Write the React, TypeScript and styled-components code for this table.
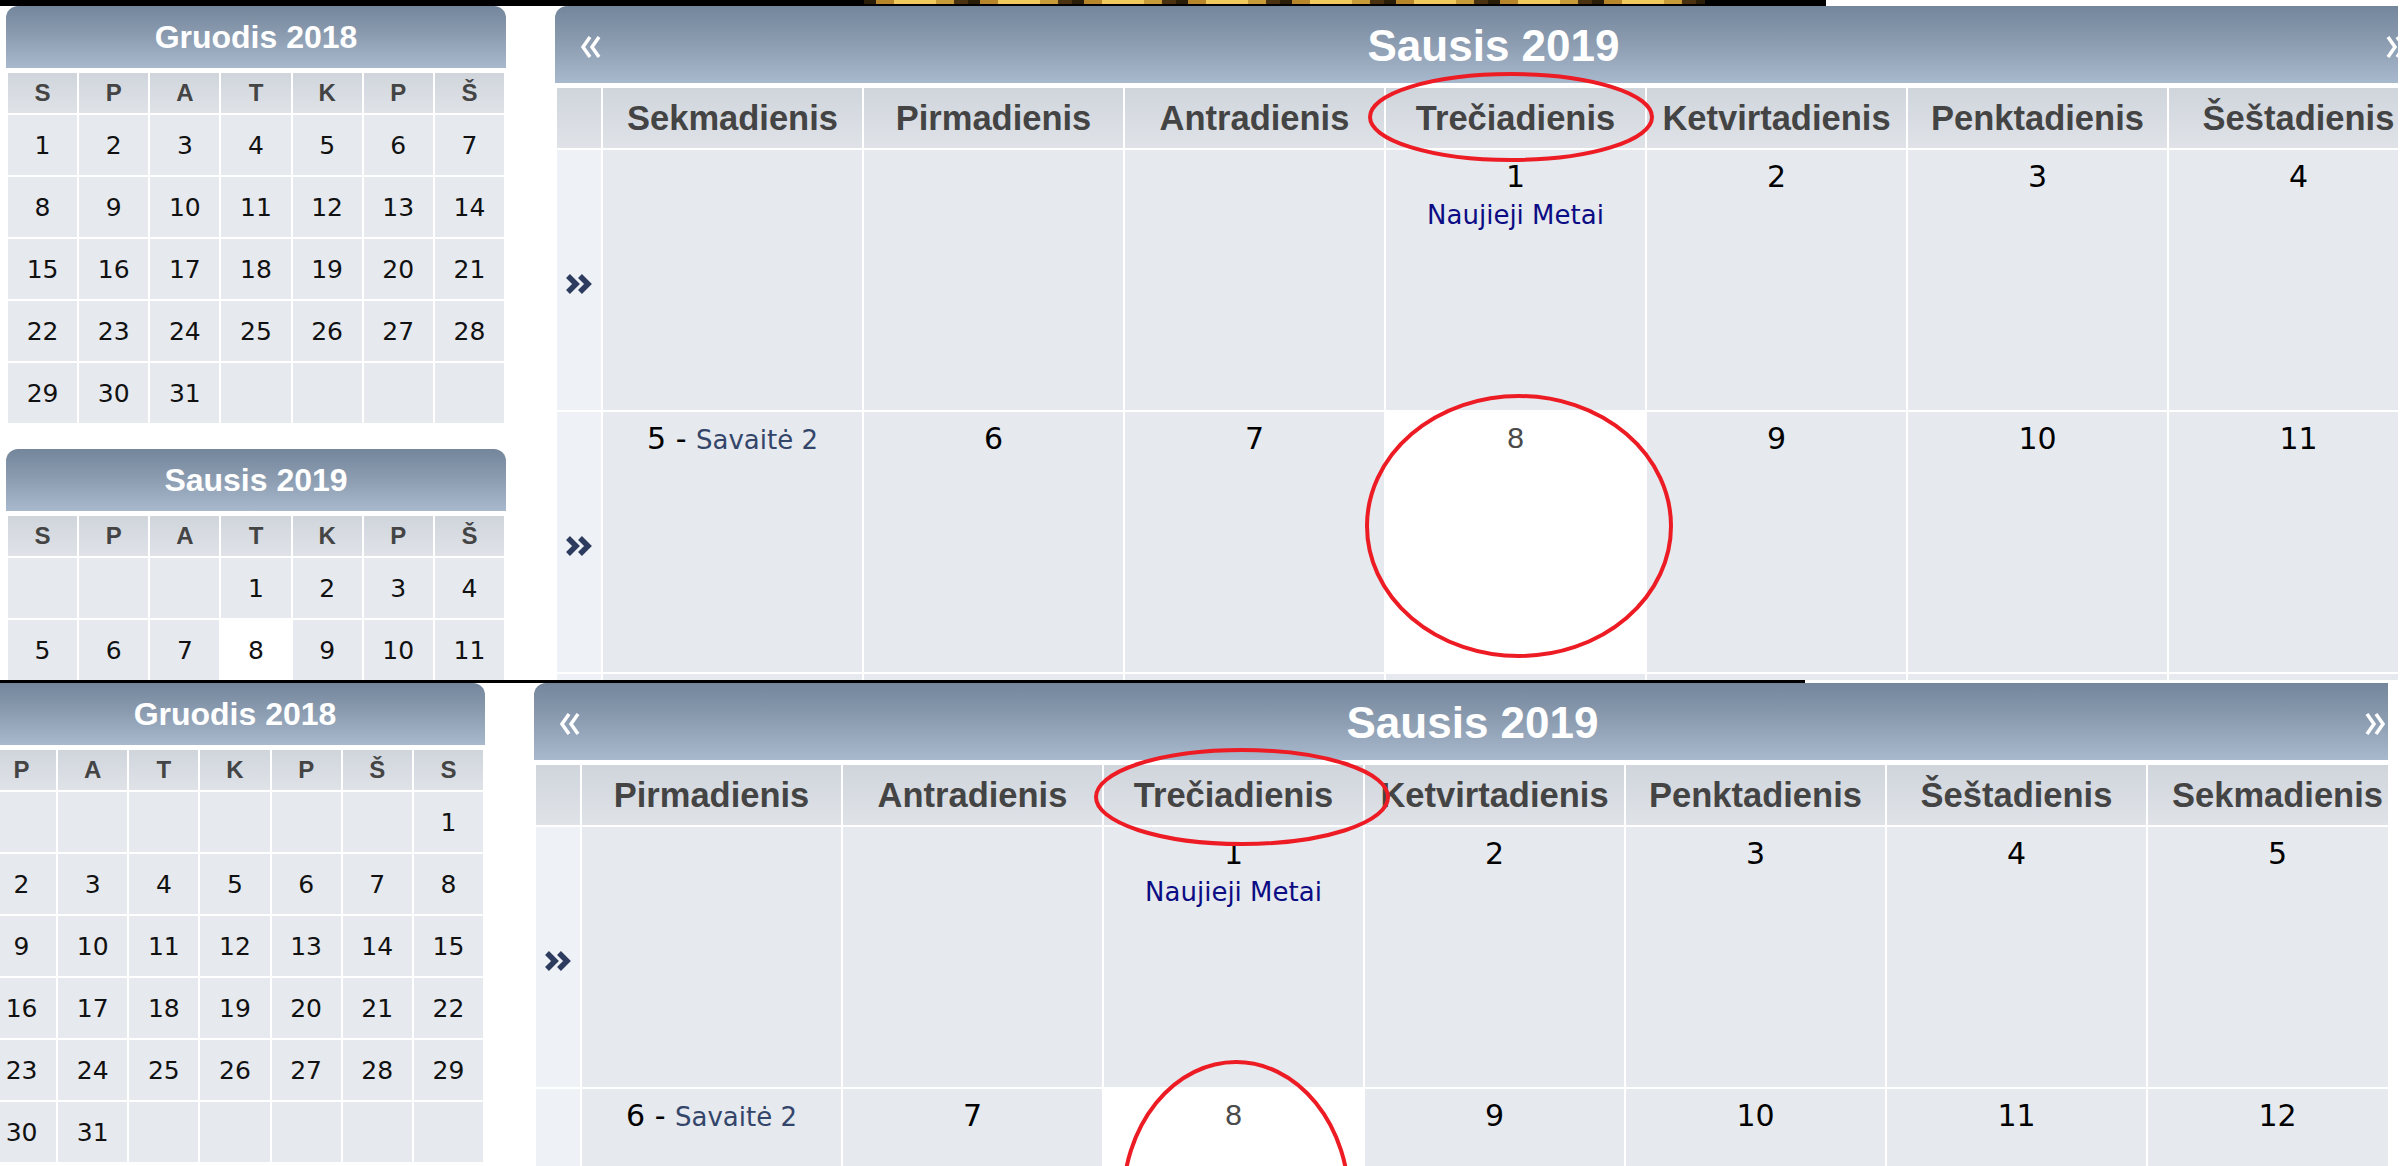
import React from 'react';
import styled, { createGlobalStyle } from 'styled-components';

const HEAD_FONT = '"Liberation Sans", Arial, sans-serif';
const BODY_FONT = '"DejaVu Sans", Verdana, sans-serif';

const GlobalStyle = createGlobalStyle`
  html, body {
    margin: 0;
    padding: 0;
    background: #fff;
  }
  body {
    font-family: ${BODY_FONT};
  }
`;

const Page = styled.div`
  position: relative;
  width: 2402px;
  height: 1166px;
  overflow: hidden;
  background: #fff;
`;

const Shot = styled.div<{ $w: number; $h: number }>`
  width: ${p => p.$w}px;
  height: ${p => p.$h}px;
  overflow: hidden;
  background: #fff;
`;

const Banner = styled.div`
  width: 1826px;
  height: 6px;
  background: #000;
  padding-left: 864px;
  box-sizing: border-box;
`;

const BannerImage = styled.div`
  width: 841px;
  height: 4px;
  background: repeating-linear-gradient(
    90deg,
    #2a1d08 0 12px,
    #b8862a 12px 30px,
    #f1c85c 30px 72px,
    #c99a38 72px 90px,
    #4a3210 90px 104px
  );
`;

const Divider = styled.div`
  width: 1805px;
  height: 3px;
  background: #000;
`;

const Layout = styled.div<{ $dx: number }>`
  display: flex;
  align-items: flex-start;
  gap: 49px;
  padding-left: 6px;
  margin-left: ${p => p.$dx}px;
`;

const Sidebar = styled.div`
  flex: 0 0 500px;
  display: flex;
  flex-direction: column;
  gap: 24px;
`;

const gradientHead = `linear-gradient(180deg, #74869b 0%, #8a9bb0 45%, #a8b9ce 100%)`;

const MiniHeader = styled.div`
  height: 62px;
  margin-bottom: 3px;
  border-radius: 12px 12px 0 0;
  background: ${gradientHead};
  color: #fff;
  font: bold 32px ${HEAD_FONT};
  display: flex;
  align-items: center;
  justify-content: center;
`;

const MiniGrid = styled.div`
  display: grid;
  grid-template-columns: repeat(7, 1fr);
  grid-template-rows: 40px;
  grid-auto-rows: 60px;
  gap: 2px;
  padding: 2px;
`;

const MiniHead = styled.div`
  background: linear-gradient(180deg, #d0d5dc, #dfe3e8);
  color: #444;
  font: bold 24px ${HEAD_FONT};
  display: flex;
  align-items: center;
  justify-content: center;
`;

const MiniDay = styled.div<{ $today?: boolean }>`
  background: ${p => (p.$today ? '#fff' : '#e6e9ee')};
  color: #111;
  font: 25px ${BODY_FONT};
  display: flex;
  align-items: center;
  justify-content: center;
`;

const Main = styled.div`
  flex: 0 0 1875px;
`;

const MainHeader = styled.div`
  height: 77px;
  margin-bottom: 3px;
  border-radius: 12px 12px 0 0;
  background: ${gradientHead};
  display: grid;
  grid-template-columns: auto 1fr auto;
  align-items: center;
  padding: 0 23px 0 25px;
`;

const MonthTitle = styled.div`
  color: #fff;
  font: bold 44px ${HEAD_FONT};
  text-align: center;
  padding-top: 2px;
`;

const NavIcon = styled.svg`
  display: block;
  margin-top: 5px;
`;

const MainGrid = styled.div`
  display: grid;
  grid-template-columns: 44px repeat(7, 259px);
  grid-template-rows: 60px;
  grid-auto-rows: 260px;
  gap: 2px;
  padding: 2px;
`;

const DayName = styled.div`
  background: linear-gradient(180deg, #d0d5dc, #dfe3e8);
  color: #444;
  font: bold 34.5px ${HEAD_FONT};
  display: flex;
  align-items: center;
  justify-content: center;
  white-space: nowrap;
`;

const WeekMarker = styled.div`
  background: #eef1f5;
  display: flex;
  align-items: center;
  justify-content: center;
  padding-top: 8px;
  box-sizing: border-box;
`;

const DayCell = styled.div<{ $today?: boolean }>`
  background: ${p => (p.$today ? '#fff' : '#e6e9ee')};
  text-align: center;
  padding-top: 9px;
  box-sizing: border-box;
  white-space: nowrap;
`;

const DayNumber = styled.span<{ $today?: boolean }>`
  font: 30px ${p => (p.$today ? HEAD_FONT : BODY_FONT)};
  color: ${p => (p.$today ? '#4a4a4a' : '#000')};
`;

const Dash = styled.span`
  font: 30px ${BODY_FONT};
  color: #000;
`;

const WeekLabel = styled.span`
  font: 26px ${BODY_FONT};
  color: #34456a;
`;

const Holiday = styled.div`
  margin-top: 6px;
  font: 26px ${BODY_FONT};
  color: #0c0c84;
`;

const Annotations = styled.svg`
  position: absolute;
  left: 0;
  top: 0;
  pointer-events: none;
`;

type Cell = number | null;

const buildWeeks = (offset: number, days: number): Cell[][] => {
  const cells: Cell[] = [
    ...Array(offset).fill(null),
    ...Array.from({ length: days }, (_, i) => i + 1),
  ];
  while (cells.length % 7) cells.push(null);
  const weeks: Cell[][] = [];
  for (let i = 0; i < cells.length; i += 7) weeks.push(cells.slice(i, i + 7));
  return weeks;
};

const TODAY = 8;
const HOLIDAYS: Record<number, string> = { 1: 'Naujieji Metai' };

interface Variant {
  letters: string[];
  names: string[];
  decOffset: number;
  janOffset: number;
}

const SUNDAY_FIRST: Variant = {
  letters: ['S', 'P', 'A', 'T', 'K', 'P', 'Š'],
  names: ['Sekmadienis', 'Pirmadienis', 'Antradienis', 'Trečiadienis', 'Ketvirtadienis', 'Penktadienis', 'Šeštadienis'],
  decOffset: 0,
  janOffset: 3,
};

const MONDAY_FIRST: Variant = {
  letters: ['P', 'A', 'T', 'K', 'P', 'Š', 'S'],
  names: ['Pirmadienis', 'Antradienis', 'Trečiadienis', 'Ketvirtadienis', 'Penktadienis', 'Šeštadienis', 'Sekmadienis'],
  decOffset: 6,
  janOffset: 2,
};

const DoubleLeft = () => (
  <NavIcon width="22" height="22" viewBox="0 0 22 22">
    <polyline points="10,1 3,11 10,21" fill="none" stroke="#fff" strokeWidth="3.5" />
    <polyline points="19,1 12,11 19,21" fill="none" stroke="#fff" strokeWidth="3.5" />
  </NavIcon>
);

const DoubleRight = () => (
  <NavIcon width="22" height="22" viewBox="0 0 22 22">
    <polyline points="3,1 10,11 3,21" fill="none" stroke="#fff" strokeWidth="3.5" />
    <polyline points="12,1 19,11 12,21" fill="none" stroke="#fff" strokeWidth="3.5" />
  </NavIcon>
);

const WeekArrow = () => (
  <svg width="28" height="22" viewBox="0 0 28 22">
    <polyline points="3,3 11,11 3,19" fill="none" stroke="#2d3b5e" strokeWidth="5.5" />
    <polyline points="15,3 23,11 15,19" fill="none" stroke="#2d3b5e" strokeWidth="5.5" />
  </svg>
);

const MiniCalendar = ({ title, letters, weeks, today }: { title: string; letters: string[]; weeks: Cell[][]; today?: number }) => (
  <div>
    <MiniHeader>{title}</MiniHeader>
    <MiniGrid>
      {letters.map((l, i) => <MiniHead key={'h' + i}>{l}</MiniHead>)}
      {weeks.flat().map((d, i) => (
        <MiniDay key={i} $today={d !== null && d === today}>{d ?? ''}</MiniDay>
      ))}
    </MiniGrid>
  </div>
);

const MonthView = ({ names, weeks }: { names: string[]; weeks: Cell[][] }) => (
  <Main>
    <MainHeader>
      <DoubleLeft />
      <MonthTitle>Sausis 2019</MonthTitle>
      <DoubleRight />
    </MainHeader>
    <MainGrid>
      <DayName />
      {names.map(n => <DayName key={n}>{n}</DayName>)}
      {weeks.map((week, w) => (
        <React.Fragment key={w}>
          <WeekMarker>{week.some(d => d !== null) && <WeekArrow />}</WeekMarker>
          {week.map((d, i) => (
            <DayCell key={i} $today={d === TODAY}>
              {d !== null && <DayNumber $today={d === TODAY}>{d}</DayNumber>}
              {d !== null && i === 0 && (
                <>
                  <Dash> - </Dash>
                  <WeekLabel>Savaitė {w + 1}</WeekLabel>
                </>
              )}
              {d !== null && HOLIDAYS[d] && <Holiday>{HOLIDAYS[d]}</Holiday>}
            </DayCell>
          ))}
        </React.Fragment>
      ))}
    </MainGrid>
  </Main>
);

// the screenshots are cropped, so each one only renders the weeks that show
interface Crop {
  janMiniRows: number;
  mainRows: number;
  peekRow: boolean;
}

const CalendarLayout = ({ variant, dx, crop }: { variant: Variant; dx: number; crop: Crop }) => {
  const dec = buildWeeks(variant.decOffset, 31);
  const jan = buildWeeks(variant.janOffset, 31);
  const mainWeeks: Cell[][] = jan.slice(0, crop.mainRows);
  if (crop.peekRow) mainWeeks.push(Array(7).fill(null));
  return (
    <Layout $dx={dx}>
      <Sidebar>
        <MiniCalendar title="Gruodis 2018" letters={variant.letters} weeks={dec} />
        {crop.janMiniRows > 0 && (
          <MiniCalendar title="Sausis 2019" letters={variant.letters} weeks={jan.slice(0, crop.janMiniRows)} today={TODAY} />
        )}
      </Sidebar>
      <MonthView names={variant.names} weeks={mainWeeks} />
    </Layout>
  );
};

export default function App() {
  return (
    <Page>
      <GlobalStyle />
      <Shot $w={2398} $h={680}>
        <Banner><BannerImage /></Banner>
        <CalendarLayout variant={SUNDAY_FIRST} dx={0} crop={{ janMiniRows: 2, mainRows: 2, peekRow: true }} />
      </Shot>
      <Divider />
      <Shot $w={2388} $h={483}>
        <CalendarLayout variant={MONDAY_FIRST} dx={-21} crop={{ janMiniRows: 0, mainRows: 2, peekRow: false }} />
      </Shot>
      <Annotations width="2402" height="1166" viewBox="0 0 2402 1166">
        <g fill="none" stroke="#ed1c24" strokeWidth="4">
          <ellipse cx="1511" cy="117" rx="141" ry="43" />
          <ellipse cx="1519" cy="526" rx="152" ry="130" />
          <ellipse cx="1242" cy="797" rx="146" ry="47" />
          <ellipse cx="1236" cy="1202" rx="113" ry="140" />
        </g>
      </Annotations>
    </Page>
  );
}
